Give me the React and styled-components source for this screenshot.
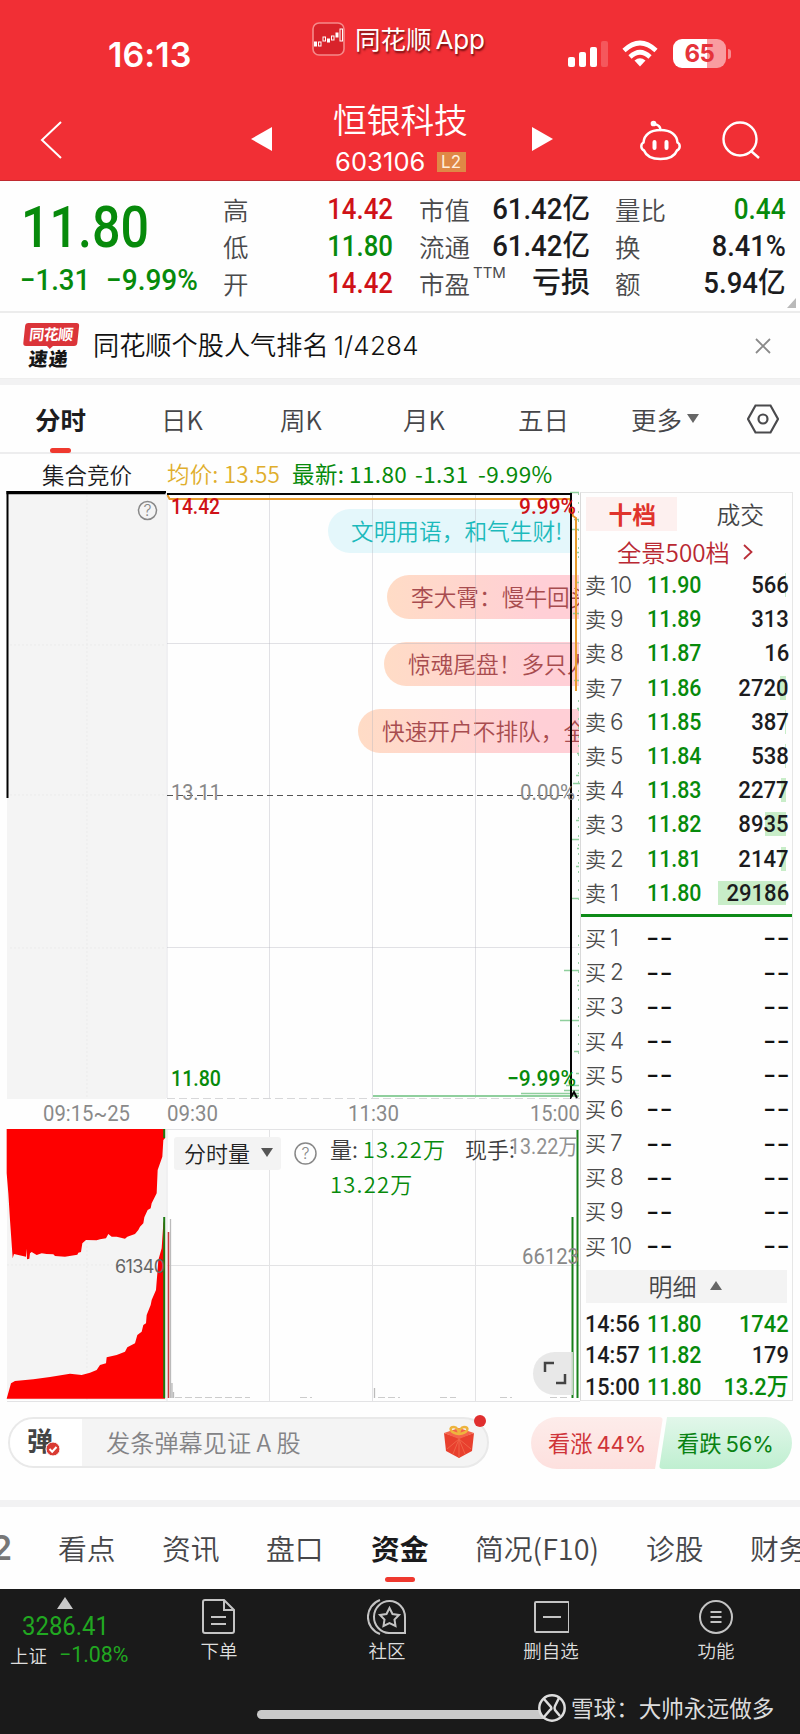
import React from 'react';
import styled, { createGlobalStyle, css } from 'styled-components';

const CJK = `"Noto Sans CJK SC", sans-serif`;
const GREEN = '#078a0b';
const RED = '#cf1217';

const Global = createGlobalStyle`
  * { box-sizing: border-box; }
  body { margin: 0; background: #fdfdfd; font-family: ${CJK}; font-weight: 350; color: #222; }
`;

const Phone = styled.div`
  width: 800px;
  height: 1734px;
  overflow: hidden;
  display: flex;
  flex-direction: column;
  background: #fefefe;
`;

/* Condensed figures, used for every price and amount */
const Num = styled.span`
  display: inline-block;
  font-family: Roboto, ${CJK};
  font-weight: ${p => p.$weight || 500};
  font-size: ${p => p.$size}px;
  line-height: 1;
  white-space: nowrap;
  color: ${p => p.$color || '#1c1c1e'};
  transform: scaleX(${p => p.$fit || 0.89});
  transform-origin: ${p => (p.$right ? 'right' : 'left')} center;
`;

/* ---------- header ---------- */
const Header = styled.header`
  height: 181px;
  flex: none;
  background: #f12f35;
  border-bottom: 1px solid #c02a30;
  color: #fff;
`;
const StatusBar = styled.div`
  height: 96px;
  display: grid;
  grid-template-columns: 312px 256px 1fr;
`;
const Clock = styled.div`
  padding: 34px 0 0 108px;
  font: 600 34px/42px Inter, sans-serif;
  letter-spacing: 0.1px;
`;
const Brand = styled.div`
  display: flex;
  align-items: flex-start;
  gap: 10px;
  padding-top: 22px;
  font-size: 25.5px;
  line-height: 34px;
  text-shadow: 1px 2px 2px rgba(60, 0, 0, 0.7);
  svg { display: block; }
`;
const BrandName = styled.span`
  margin-top: -1px;
  font-weight: 400;
  white-space: nowrap;
`;
const BrandLatin = styled.span`
  font: 26px Inter, sans-serif;
  margin-left: 4px;
  letter-spacing: -0.2px;
`;
const Signals = styled.div`
  display: flex;
  align-items: flex-start;
  padding-top: 39px;
  svg { display: block; flex: none; }
`;
const WifiIcon = styled.svg` margin-left: 13px; `;
const Battery = styled.div`
  margin-left: 14px;
  width: 53px;
  height: 29px;
  border-radius: 9px;
  background: linear-gradient(90deg, #fff 65%, #f99ca0 65%);
  color: #e5333a;
  text-align: center;
  font: 700 24px/29px Inter, sans-serif;
  letter-spacing: -0.5px;
`;
const BatteryTip = styled.div`
  width: 3px;
  height: 10px;
  margin: 10px 0 0 2px;
  border-radius: 0 3px 3px 0;
  background: #f88b8f;
`;
const NavBar = styled.div`
  height: 84px;
  display: grid;
  grid-template-columns: 251px 82px 133px 66px 106px 84px 1fr;
  svg { display: block; }
`;
const Back = styled.div` padding: 25px 0 0 40px; `;
const Arrow = styled.div` padding-top: 31px; `;
const Robot = styled.div` padding-top: 22px; `;
const Search = styled.div` padding-top: 25px; `;
const StockTitle = styled.div`
  font-size: 33.7px;
  line-height: 46px;
  height: 50px;
  white-space: nowrap;
`;
const StockCode = styled.div`
  display: flex;
  align-items: center;
  height: 24px;
  margin-top: 4px;
  padding-left: 2px;
  gap: 11px;
  font: 25.5px/24px Inter, sans-serif;
  letter-spacing: 0.1px;
`;
const LevelBadge = styled.span`
  width: 29px;
  height: 20px;
  background: #df8846;
  color: #ffeedd;
  font: 17px/20px Inter, sans-serif;
  letter-spacing: 0;
  text-align: center;
`;

/* ---------- quote ---------- */
const Quote = styled.section`
  position: relative;
  height: 132px;
  flex: none;
  display: grid;
  grid-template-columns: 203px 169px 169px 171px;
  padding-left: 20px;
  border-bottom: 2px solid #ececec;
`;
const LastPrice = styled.div`
  padding: 17px 0 0 1px;
  height: 84px;
`;
const Change = styled.div`
  display: flex;
  gap: 12px;
  padding-top: 1px;
`;
const Metrics = styled.div`
  display: flex;
  flex-direction: column;
  padding-top: 10px;
  width: 169px;
  margin-left: ${p => p.$left}px;
`;
const Metric = styled.div`
  width: ${p => p.$w}px;
  height: 37px;
  display: flex;
  align-items: center;
  justify-content: space-between;
`;
const MetricLabel = styled.span`
  position: relative;
  font-size: 25.5px;
  line-height: 37px;
  margin-top: -3px;
  color: #4a4a4c;
  sup {
    position: absolute;
    left: 54px;
    top: -6px;
    font: 15px/30px Inter, sans-serif;
  }
`;
const Corner = styled.div`
  position: absolute;
  left: 787px;
  top: 117px;
  border-left: 9px solid transparent;
  border-bottom: 10px solid #b9b9b9;
`;

/* ---------- news strip ---------- */
const News = styled.section`
  height: 66px;
  flex: none;
  display: flex;
  align-items: center;
  padding: 0 29px 0 23px;
  border-bottom: 1px solid #eee;
`;
const NewsLogo = styled.div`
  width: 54px;
  height: 46px;
  position: relative;
  text-align: center;
  transform: skewX(-6deg);
`;
const NewsLogoTop = styled.div`
  height: 23px;
  border-radius: 3px;
  background: #db3439;
  color: #fff;
  font-weight: 700;
  font-size: 15px;
  line-height: 22px;
  letter-spacing: -0.5px;
  &::after {
    content: '';
    position: absolute;
    left: 23px;
    top: 22px;
    border: 4px solid transparent;
    border-top-color: #db3439;
  }
`;
const NewsLogoBottom = styled.div`
  font-weight: 900;
  font-size: 19px;
  line-height: 23px;
  letter-spacing: 1px;
  color: #161616;
`;
const NewsText = styled.div`
  flex: 1;
  margin-top: -3px;
  padding-left: 16px;
  font-size: 26.2px;
  line-height: 40px;
  color: #111;
  white-space: nowrap;
  b { font: 350 26px Inter, sans-serif; letter-spacing: 0.2px; margin-left: 5px; }
`;
const Band = styled.div`
  height: ${p => p.$h}px;
  flex: none;
  background: #f2f2f3;
`;

/* ---------- period tabs ---------- */
const Periods = styled.nav`
  height: 69px;
  flex: none;
  display: grid;
  grid-template-columns: 126px 119px 123px 115px 113px 116px 1fr;
  padding-left: 35px;
  border-bottom: 2px solid #ededee;
`;
const Period = styled.div`
  position: relative;
  height: 69px;
  padding-bottom: 2px;
  display: flex;
  align-items: center;
  font-size: 25.5px;
  font-weight: ${p => (p.$on ? 700 : 350)};
  color: ${p => (p.$on ? '#1d1d1f' : '#464649')};
  ${p => p.$on && css`
    &::after {
      content: '';
      position: absolute;
      left: 15px;
      bottom: 1px;
      width: 21px;
      height: 5px;
      border-radius: 3px;
      background: #ef392f;
    }
  `}
`;
const Caret = styled.i`
  display: block;
  width: 0;
  border: ${p => p.$s}px solid transparent;
  border-bottom-width: ${p => (p.$up ? p.$s * 1.6 : 0)}px;
  border-top-width: ${p => (p.$up ? 0 : p.$s * 1.6)}px;
  border-${p => (p.$up ? 'bottom' : 'top')}-color: ${p => p.$c || '#666'};
  margin-left: ${p => p.$ml || 0}px;
`;

const InfoLine = styled.div`
  height: 37px;
  flex: none;
  display: flex;
  align-items: center;
  font-size: 22.5px;
  font-weight: 400;
  line-height: 36px;
  white-space: pre;
`;
const AuctionTitle = styled.span` width: 167px; padding: 2px 0 0 42px; font-weight: 350; color: #1c1c1e; `;
const Average = styled.span` width: 125px; color: #e0ae2c; font-weight: 350; letter-spacing: .15px; `;
const Latest = styled.span` color: ${GREEN}; display: flex; letter-spacing: .4px; `;
const LatestPart = styled.span` width: ${p => p.$w}px; `;

/* ---------- market ---------- */
const Market = styled.section`
  height: 911px;
  flex: none;
  display: flex;
`;
const Charts = styled.div`
  width: 580px;
  display: flex;
  flex-direction: column;
  svg { display: block; }
`;
const PricePane = styled.div`
  position: relative;
  height: 608px;
  overflow: hidden;
`;
const Lines = styled.svg`
  position: relative;
`;
const Barrage = styled.div`
  position: absolute;
  left: ${p => p.$x}px;
  top: ${p => p.$y}px;
  width: ${p => (p.$cool ? 242 : 579 - p.$x)}px;
  height: 44px;
  border-radius: 22px 0 0 22px;
  overflow: hidden;
  padding-left: ${p => (p.$cool ? 23 : 24)}px;
  font-size: 22.7px;
  line-height: 43px;
  white-space: nowrap;
  color: ${p => (p.$cool ? '#1cbabc' : '#a84c4f')};
  background: ${p => (p.$cool
    ? '#e4f7fb'
    : 'linear-gradient(90deg, #ffdcc6, #ffcfd6 80%)')};
`;
const Axis = styled.div`
  height: 30px;
  display: grid;
  grid-template-columns: 124px 181px 182px 1fr;
  padding-left: 43px;
  align-items: center;
`;
const VolumePane = styled.div`
  position: relative;
  height: 273px;
`;
const VolumeTools = styled.div`
  position: absolute;
  left: 174px;
  top: 8px;
  display: grid;
  grid-template-columns: 107px 14px 1fr;
  align-items: start;
`;
const Picker = styled.div`
  height: 33px;
  width: 107px;
  padding: 0 0 3px 10px;
  display: flex;
  align-items: center;
  background: #f3f3f3;
  border-radius: 3px;
  font-size: 22px;
  color: #222;
`;
const VolumeText = styled.div`
  grid-column: 3;
  padding-left: 35px;
  margin-top: -6px;
  font-size: 22px;
  line-height: 35px;
  white-space: pre;
  color: #3c3c3c;
  em { font-style: normal; color: ${GREEN}; letter-spacing: 1.2px; margin-right: 4px; }
`;
const Expand = styled.div`
  position: absolute;
  left: 533px;
  top: 223px;
  width: 40px;
  height: 43px;
  border-radius: 22px 0 0 22px;
  background: rgba(228, 228, 228, 0.85);
`;

/* ---------- order book ---------- */
const Book = styled.aside`
  width: 213px;
  height: 909px;
  padding-top: 4px;
  margin-top: 1px;
  border: 1px solid #e6e6e6;
  border-left-color: #d9d9d9;
`;
const BookTabs = styled.div`
  display: flex;
  height: 34px;
  padding-left: 5px;
  font-size: 23.8px;
  line-height: 33px;
`;
const BookTab = styled.div`
  width: ${p => (p.$on ? 94 : 119)}px;
  padding-left: ${p => (p.$on ? 2 : 12)}px;
  text-align: center;
  background: ${p => (p.$on ? '#fdf0ef' : 'none')};
  color: ${p => (p.$on ? '#e0332c' : '#464648')};
  font-weight: ${p => (p.$on ? 700 : 350)};
`;
const Depth = styled.div`
  height: 37px;
  padding: 4px 0 0 36px;
  display: flex;
  align-items: center;
  gap: 13px;
  font-size: 24.3px;
  line-height: 34px;
  color: #b92832;
`;
const BookRow = styled.div`
  height: ${p => p.$h || 34.2}px;
  display: grid;
  grid-template-columns: 62px 67px 1fr;
  align-items: center;
  padding: 0 3px 0 4px;
`;
const Level = styled.span`
  font-size: 21px;
  line-height: 30px;
  margin-top: -2px;
  color: #4c4c4c;
  white-space: nowrap;
  b { font: 350 22.5px Inter, ${CJK}; letter-spacing: -0.5px; margin-left: 4px; }
`;
const Amount = styled.div`
  height: 24px;
  display: flex;
  justify-content: flex-end;
  align-items: center;
  background: linear-gradient(#c8edc8, #c8edc8) no-repeat right 3px top / ${p => p.$bar || 0}px 24px;
`;
const Blank = styled.span`
  font: 400 29px/24px Inter, sans-serif;
  color: #111;
  letter-spacing: 0.2px;
  margin: 1px -1px 0 -1px;
  text-align: ${p => (p.$right ? 'right' : 'left')};
`;
const Split = styled.div`
  height: 3px;
  margin: 4px 0 4px;
  background: #0d8a17;
`;
const DetailHead = styled.div`
  height: 33px;
  margin: 7px 5px 5px;
  padding: 0 3px 1px 0;
  display: flex;
  align-items: center;
  justify-content: center;
  background: #f3f3f3;
  font-size: 24px;
  color: #464648;
`;

/* ---------- comment bar ---------- */
const CommentBar = styled.section`
  height: 98px;
  flex: none;
  display: flex;
  padding: 15px 8px 0;
`;
const Comment = styled.div`
  width: 481px;
  height: 51px;
  position: relative;
  display: flex;
  border: 2px solid #e9e9e9;
  border-radius: 26px;
  background: #f4f4f4;
`;
const Toggle = styled.div`
  width: 72px;
  border-radius: 24px 0 0 24px;
  background: #fff;
  padding-left: 17px;
  font-size: 26px;
  line-height: 41px;
  font-weight: 700;
  color: #444;
`;
const CheckBadge = styled.div`
  position: absolute;
  left: 35px;
  top: 22px;
  svg { display: block; }
`;
const Placeholder = styled.div`
  flex: 1;
  padding-left: 24px;
  font-size: 24.2px;
  line-height: 46px;
  color: #838386;
  white-space: pre;
`;
const Gift = styled.div`
  position: absolute;
  left: 432px;
  top: -5px;
`;
const Votes = styled.div`
  display: flex;
  margin-left: 42px;
`;
const Vote = styled.div`
  width: ${p => (p.$down ? 133 : 132)}px;
  margin-left: ${p => (p.$down ? -4 : 0)}px;
  height: 52px;
  padding-left: ${p => (p.$down ? 18 : 17)}px;
  font-size: 22.3px;
  font-weight: 400;
  line-height: 50px;
  white-space: nowrap;
  color: ${p => (p.$down ? '#0a8213' : '#cf3439')};
  border-radius: ${p => (p.$down ? '4px 26px 26px 4px' : '26px 4px 4px 26px')};
  background: ${p => (p.$down ? 'linear-gradient(#e2f7ea, #bfefd0)' : 'linear-gradient(#fdecea, #fde0de)')};
  clip-path: ${p => (p.$down ? 'polygon(8px 0, 100% 0, 100% 100%, 0 100%)' : 'polygon(0 0, 100% 0, 124px 100%, 0 100%)')};
  b { font: 400 22px Inter, sans-serif; letter-spacing: -0.2px; margin-left: 4px; }
`;

/* ---------- section tabs ---------- */
const Sections = styled.nav`
  height: 82px;
  flex: none;
  display: grid;
  grid-template-columns: 69px 104px 104px 105px 104px 171px 104px 60px;
  margin-left: -11px;
  width: 821px;
`;
const Section = styled.div`
  position: relative;
  font-size: 28.8px;
  line-height: 81px;
  white-space: nowrap;
  font-weight: ${p => (p.$on ? 700 : 350)};
  color: ${p => (p.$on ? '#1a1a1c' : '#464649')};
  ${p => p.$cut && css` font: 600 34px/82px Inter, sans-serif; color: #777; padding-left: 2px; `}
  ${p => p.$on && css`
    &::after {
      content: '';
      position: absolute;
      left: 14px;
      top: 70px;
      width: 30px;
      height: 5px;
      border-radius: 3px;
      background: #ef392f;
    }
  `}
`;

/* ---------- bottom bar ---------- */
const Bottom = styled.footer`
  position: relative;
  height: 146px;
  flex: none;
  background: #1a1a1a;
  color: #dedede;
`;
const Tools = styled.div`
  display: grid;
  grid-template-columns: 140px 158px 178px 150px 180px;
  height: 84px;
`;
const IndexBox = styled.div`
  padding: 8px 0 0 10px;
`;
const IndexValue = styled.div`
  height: 26px;
  padding-left: 12px;
  margin: 4px 0 0;
  line-height: 0;
`;
const IndexChange = styled.div`
  display: flex;
  align-items: center;
  gap: 12px;
  font-size: 18.5px;
  line-height: 26px;
  margin-top: 3px;
`;
const Tool = styled.div`
  display: flex;
  flex-direction: column;
  align-items: center;
  padding-top: 8px;
  font-size: 18.5px;
  line-height: 28px;
  svg { display: block; margin-bottom: -1px; }
`;
const HomeBar = styled.div`
  width: 292px;
  height: 9px;
  margin: 37px 0 0 257px;
  border-radius: 5px;
  background: #c9c9c9;
`;
const Watermark = styled.div`
  position: absolute;
  left: 537px;
  top: 102px;
  display: flex;
  align-items: center;
  gap: 4px;
  font-size: 22.6px;
  font-weight: 400;
  line-height: 30px;
  height: 33px;
  color: #dcdcdc;
  white-space: nowrap;
  svg { display: block; }
`;

const sells = [
  ['10', '11.90', '566', 1], ['9', '11.89', '313', 0], ['8', '11.87', '16', 0],
  ['7', '11.86', '2720', 6], ['6', '11.85', '387', 1], ['5', '11.84', '538', 1],
  ['4', '11.83', '2277', 5], ['3', '11.82', '8935', 21], ['2', '11.81', '2147', 5],
  ['1', '11.80', '29186', 68],
];
const buys = ['1', '2', '3', '4', '5', '6', '7', '8', '9', '10'];
const deals = [
  ['14:56', '11.80', '1742', GREEN], ['14:57', '11.82', '179', '#1c1c1e'], ['15:00', '11.80', '13.2万', GREEN],
];

const ChartText = ({ x, y, w, size = 22, color, weight = 500, children }) => (
  <text x={x} y={y} textLength={w} lengthAdjust="spacingAndGlyphs" fill={color}
    fontSize={size} fontWeight={weight} fontFamily={`Roboto, ${CJK}`}>{children}</text>
);

const Question = ({ cx, cy, r }) => (
  <g>
    <circle cx={cx} cy={cy} r={r} fill="none" stroke="#888" strokeWidth="1.5" />
    <text x={cx} y={cy + 5.5} textAnchor="middle" fontSize="16" fontFamily="Inter" fill="#888">?</text>
  </g>
);

const priceTicks = [[570, 492, 9], [574, 519, 5], [572, 529, 7], [577, 552, 2], [575, 582, 4], [573, 613, 6],
  [574, 680, 5], [577, 708, 2], [577, 753, 2], [576, 775, 3], [573, 783, 7], [576, 820, 3], [572, 839, 7], [577, 848, 2],
  [576, 866, 3], [572, 898, 7], [564, 970, 15], [577, 985, 2], [560, 1020, 19], [574, 1051, 5], [576, 1073, 3],
  [566, 1085, 13], [521, 1093, 58], [564, 1090, 15]];

function PriceChart() {
  return (
    <Lines width="580" height="608" viewBox="0 491 580 608">
      <rect x="7" y="493" width="159" height="606" fill="#f4f4f4" />
      <path d="M87 495V1098M10 645H166M10 795H166M10 948H166" stroke="#ebebeb" strokeDasharray="2 2" />
      <path d="M167 493V1098M269.5 493V1098M372.5 493V1098M475.5 493V1098M167 643.5H580M167 947.5H580" stroke="#b4b4bc" strokeOpacity=".38" />
      <path d="M167 1098.5H580" stroke="#d7d7d9" strokeDasharray="8 4" />
      <path d="M167 795.5H579" stroke="#555" strokeDasharray="6 4" />
      <path d={priceTicks.map(([x, y, w]) => `M${x} ${y + 0.5}h${w}`).join('')} stroke="#8fcf9d" strokeWidth="1.3" />
      <path d="M373 1096H579" stroke="#8fcf9d" strokeWidth="1.8" />
      <path d="M578.5 493V560M578.5 700V900M578.5 935V1060" stroke="#9ed2a9" strokeDasharray="2 7" />
      <path d="M7.5 798V492H166" fill="none" stroke="#000" strokeWidth="2" />
      <path d="M6.5 492.5H165.5" stroke="#000" strokeWidth="3.5" />
      <path d="M167.5 495L169.500 499H570L573 516L576 518V691" fill="none" stroke="#e79a2b" strokeWidth="2" />
      <path d="M167 494H571V1097L574 1092L577 1098" fill="none" stroke="#060606" strokeWidth="2" />
      <ChartText x={171} y={514} w={49} color={RED}>14.42</ChartText>
      <ChartText x={519} y={514} w={57} color={RED}>9.99%</ChartText>
      <ChartText x={171} y={800} w={50} color="#888" weight={400}>13.11</ChartText>
      <ChartText x={520} y={800} w={55} color="#888" weight={400}>0.00%</ChartText>
      <ChartText x={171} y={1085.5} w={50} color={GREEN}>11.80</ChartText>
      <ChartText x={507} y={1085.5} w={69} color={GREEN}>−9.99%</ChartText>
      <Question cx={147.5} cy={510.5} r={9} />
    </Lines>
  );
}

const redTop = '20,206 20,340 25,400 30,480 38,595 42,582 78,590 80,566 81,598 88,596 90,580 95,576 110,585 125,580 140,582 160,583 165,588 195,590 232,584 235,578 243,576 247,550 258,540 290,541 300,538 318,535 325,522 335,530 350,530 375,536 382,530 405,522 415,510 420,500 430,490 433,472 443,450 452,445 455,430 470,400 473,330 487,290 490,240 495,235 495,206';
const redLow = '20,1016 33,970 45,963 100,958 150,951 210,941 245,945 270,938 290,930 300,915 318,910 320,892 350,885 375,875 382,862 405,850 412,825 425,815 430,795 438,790 440,765 452,735 455,720 468,690 472,640 475,600 485,565 490,490 495,472 495,1016';

function VolumeChart() {
  return (
    <svg width="580" height="273" viewBox="0 1129 580 273">
      <rect x="7" y="1129" width="159" height="271" fill="#f4f4f4" />
      <path d="M87 1130V1400M7 1265H166" stroke="#ebebeb" strokeDasharray="2 2" />
      <path d="M7 1129.5H580M167 1129V1401M269.5 1129V1401M372.5 1129V1401M475.5 1129V1401M167 1265.5H580M7 1401.5H580" stroke="#e3e3e5" />
      <g transform="translate(0 1060) scale(.33333)" fill="#fe0000">
        <polygon points={redTop} />
        <polygon points={redLow} />
      </g>
      <path d="M164.2 1129v9M164.2 1217V1398" stroke="#1e7a12" strokeWidth="2" />
      <path d="M168.5 1232V1398" stroke="#c9383c" strokeWidth="1.6" />
      <path d="M170.5 1219V1398M172 1383V1398M173.5 1392V1398M374.5 1388V1398" stroke="#bbb" strokeWidth="1.3" />
      <path d="M175 1397.5H250M300 1397.5H312M378 1397.5H400M440 1397.5H456M500 1397.5H512M550 1397.5H570" stroke="#ccc" strokeDasharray="7 3" />
      <path d="M572.5 1217V1398M577.5 1130V1398" stroke="#16801a" strokeWidth="2" />
      <text x="115" y="1273" fontSize="18" textLength="50" fontFamily="Inter" fontWeight="400" fill="#666">61340</text>
      <ChartText x={509} y={1154} w={69} color="#909090" weight={400}>13.22万</ChartText>
      <ChartText x={522} y={1264} w={57} color="#888" weight={400}>66123</ChartText>
      <Question cx={305.5} cy={1153.5} r={10.5} />
    </svg>
  );
}

export default function App() {
  return (
    <Phone>
      <Global />
      <Header>
        <StatusBar>
          <Clock>16:13</Clock>
          <Brand>
            <svg width="33" height="34" viewBox="0 0 33 34">
              <rect x="1" y="1" width="31" height="32" rx="6" fill="#d9232b" stroke="#f58a8a" strokeWidth="1.6" />
              <g stroke="#fff" fill="none" strokeWidth="1">
                <rect x="2.5" y="20" width="2" height="4" fill="#fff" /><rect x="6.5" y="20" width="2.5" height="4" />
                <rect x="11" y="15" width="2.5" height="4" /><rect x="15.5" y="17" width="2" height="3" fill="#fff" />
                <rect x="19.5" y="14" width="2.500" height="4" /><rect x="24" y="11" width="2" height="4" fill="#fff" /><rect x="28" y="7" width="2.500" height="12" />
              </g>
            </svg>
            <BrandName>同花顺<BrandLatin>App</BrandLatin></BrandName>
          </Brand>
          <Signals>
            <svg width="41" height="30" viewBox="0 0 41 30" fill="#fff">
              <rect x="0" y="18" width="7" height="10" rx="2" /><rect x="11" y="13" width="7" height="15" rx="2" />
              <rect x="22" y="8" width="7" height="20" rx="2" /><rect x="33" y="2" width="7" height="26" rx="2" fill="#f5575c" />
            </svg>
            <WifiIcon width="37" height="30" viewBox="0 0 37 30" fill="none" stroke="#fff" strokeWidth="4.6">
              <path d="M2 11.5Q18 -3.5 34 11.5" /><path d="M8 18Q18 8.5 28 18" />
              <path d="M12.5 21.5Q18 17 23.500 21.500L18 27.500Z" fill="#fff" stroke="none" />
            </WifiIcon>
            <Battery>65</Battery><BatteryTip />
          </Signals>
        </StatusBar>
        <NavBar>
          <Back><svg width="24" height="38" viewBox="0 0 24 38"><path d="M21 1L2 19L21 37" fill="none" stroke="#fff" strokeWidth="2" /></svg></Back>
          <Arrow><svg width="21" height="24"><path d="M21 0V24L0 12Z" fill="#fff" /></svg></Arrow>
          <div>
            <StockTitle>恒银科技</StockTitle>
            <StockCode>603106<LevelBadge>L2</LevelBadge></StockCode>
          </div>
          <div />
          <Arrow><svg width="21" height="24"><path d="M0 0V24L21 12Z" fill="#fff" /></svg></Arrow>
          <Robot>
            <svg width="46" height="44" viewBox="0 0 46 44" fill="none" stroke="#fff" strokeWidth="2.5" strokeLinecap="round">
              <path d="M22.500 12C33 12 39 17 39.500 24.500C42.500 26 42.500 31 39 32.500C36.500 39 31 41 22.500 41C14 41 8.500 39 6 32.500C2.500 31 2.500 26 5.500 24.500C6 17 12 12 22.500 12Z" />
              <path d="M22.500 12Q22.500 7 16 6" /><circle cx="15.500" cy="5.500" r="1.600" fill="#fff" />
              <path d="M16.500 24v6M28.500 24v6" strokeWidth="4" />
            </svg>
          </Robot>
          <Search>
            <svg width="38" height="38" viewBox="0 0 38 38" fill="none" stroke="#fff" strokeWidth="2.4"><circle cx="18" cy="18" r="16.500" /><path d="M29 30L37 37" /></svg>
          </Search>
        </NavBar>
      </Header>

      <Quote>
        <div>
          <LastPrice><Num $size={58} $color={GREEN} $fit={0.865}>11.80</Num></LastPrice>
          <Change>
            <Num $size={29} $color={GREEN} $fit={0.95}>−1.31</Num>
            <Num $size={29} $color={GREEN} $fit={0.965}>−9.99%</Num>
          </Change>
        </div>
        <Metrics $left={0}>
          <Metric $w={170}><MetricLabel>高</MetricLabel><Num $right $size={29} $color={RED}>14.42</Num></Metric>
          <Metric $w={170}><MetricLabel>低</MetricLabel><Num $right $size={29} $color={GREEN}>11.80</Num></Metric>
          <Metric $w={170}><MetricLabel>开</MetricLabel><Num $right $size={29} $color={RED}>14.42</Num></Metric>
        </Metrics>
        <Metrics $left={27}>
          <Metric $w={171}><MetricLabel>市值</MetricLabel><Num $right $size={29} $fit={0.95}>61.42亿</Num></Metric>
          <Metric $w={171}><MetricLabel>流通</MetricLabel><Num $right $size={29} $fit={0.95}>61.42亿</Num></Metric>
          <Metric $w={171}><MetricLabel>市盈<sup>TTM</sup></MetricLabel><Num $right $size={29} $fit={1}>亏损</Num></Metric>
        </Metrics>
        <Metrics $left={54}>
          <Metric $w={171}><MetricLabel>量比</MetricLabel><Num $right $size={29} $color={GREEN} $fit={0.9}>0.44</Num></Metric>
          <Metric $w={171}><MetricLabel>换</MetricLabel><Num $right $size={29} $fit={0.94}>8.41%</Num></Metric>
          <Metric $w={171}><MetricLabel>额</MetricLabel><Num $right $size={29} $fit={0.95}>5.94亿</Num></Metric>
        </Metrics>
        <Corner />
      </Quote>

      <News>
        <NewsLogo><NewsLogoTop>同花顺</NewsLogoTop><NewsLogoBottom>速递</NewsLogoBottom></NewsLogo>
        <NewsText>同花顺个股人气排名<b>1/4284</b></NewsText>
        <svg width="16" height="16"><path d="M1 1L15 15M15 1L1 15" stroke="#8a8a8a" strokeWidth="1.800" /></svg>
      </News>
      <Band $h={6} />

      <Periods>
        <Period $on>分时</Period><Period>日K</Period><Period>周K</Period><Period>月K</Period><Period>五日</Period>
        <Period>更多<Caret $s={6} $ml={5} /></Period>
        <Period>
          <svg width="32" height="30" viewBox="0 0 32 30" fill="none" stroke="#4a4a4d" strokeWidth="2.2"><path d="M8.500 1.500H23.500L31 15L23.500 28.500H8.500L1 15Z" /><circle cx="16" cy="15" r="4.500" /></svg>
        </Period>
      </Periods>

      <InfoLine>
        <AuctionTitle>集合竞价</AuctionTitle>
        <Average>均价: 13.55</Average>
        <Latest><LatestPart $w={57}>最新:</LatestPart><LatestPart $w={66}>11.80</LatestPart><LatestPart $w={63}>-1.31</LatestPart><span>-9.99%</span></Latest>
      </InfoLine>

      <Market>
        <Charts>
          <PricePane>
            <Barrage $cool $x={328} $y={18}>文明用语，和气生财!</Barrage>
            <Barrage $x={387} $y={84}>李大霄：慢牛回头</Barrage>
            <Barrage $x={384} $y={151}>惊魂尾盘！多只人</Barrage>
            <Barrage $x={358} $y={218}>快速开户不排队，全</Barrage>
            <PriceChart />
          </PricePane>
          <Axis>
            <Num $size={22} $weight={400} $color="#8a8a8a" $fit={0.92}>09:15~25</Num>
            <Num $size={22} $weight={400} $color="#8a8a8a" $fit={0.93}>09:30</Num>
            <Num $size={22} $weight={400} $color="#8a8a8a" $fit={0.93}>11:30</Num>
            <Num $size={22} $weight={400} $color="#8a8a8a" $fit={0.91}>15:00</Num>
          </Axis>
          <VolumePane>
            <VolumeChart />
            <VolumeTools>
              <Picker>分时量<Caret $s={6} $ml={11} $c="#555" /></Picker>
              <div />
              <VolumeText>量: <em>13.22万</em>   现手:{'\n'}<em>13.22万</em></VolumeText>
            </VolumeTools>
            <Expand><svg width="40" height="43" fill="none" stroke="#444" strokeWidth="2.500"><path d="M12 20V11H21M32 22V31H23" /></svg></Expand>
          </VolumePane>
        </Charts>
        <Book>
          <BookTabs><BookTab $on>十档</BookTab><BookTab>成交</BookTab></BookTabs>
          <Depth>全景500档<svg width="10" height="16"><path d="M1 1L8.500 8L1 15" fill="none" stroke="#b92e38" strokeWidth="1.800" /></svg></Depth>
          {sells.map(([n, price, qty, bar]) => (
            <BookRow key={n}>
              <Level>卖<b>{n}</b></Level>
              <Num $size={24} $color={GREEN}>{price}</Num>
              <Amount $bar={bar}><Num $right $size={24} $fit={0.92}>{qty}</Num></Amount>
            </BookRow>
          ))}
          <Split />
          {buys.map(n => (
            <BookRow key={n}>
              <Level>买<b>{n}</b></Level>
              <Blank>--</Blank>
              <Blank $right>--</Blank>
            </BookRow>
          ))}
          <DetailHead>明细<Caret $up $s={6} $ml={13} /></DetailHead>
          {deals.map(([time, price, qty, color]) => (
            <BookRow key={time} $h={31.7}>
              <Num $size={24} $fit={0.9}>{time}</Num>
              <Num $size={24} $color={GREEN}>{price}</Num>
              <Amount><Num $right $size={24} $color={color} $fit={0.91}>{qty}</Num></Amount>
            </BookRow>
          ))}
        </Book>
      </Market>

      <CommentBar>
        <Comment>
          <Toggle>弹
            <CheckBadge><svg width="16" height="16"><circle cx="8" cy="8" r="7" fill="#d93a32" stroke="#fff" /><path d="M4.500 8L7.200 10.700L11.500 6" fill="none" stroke="#fff" strokeWidth="2" /></svg></CheckBadge>
          </Toggle>
          <Placeholder>发条弹幕见证 A 股</Placeholder>
          <Gift>
            <svg width="48" height="48" viewBox="0 0 48 48">
              <circle cx="38" cy="7" r="6" fill="#e02f2f" />
              <path d="M2 19L17 24L32 19L30 37L17 44L4 37Z" fill="#e8402e" />
              <path d="M2 19L17 14L32 19L17 25Z" fill="#f4644a" />
              <path d="M17 25V44M17 25L5 35M17 25L29 35M17 25L11 40M17 25L23 40" stroke="#f06448" strokeWidth="1" />
              <path d="M17 20C8 19 6 13 12 13C15 13 17 17 17 20C17 17 19 13 22 13C28 13 26 19 17 20Z" fill="none" stroke="#eeb43d" strokeWidth="2.500" />
            </svg>
          </Gift>
        </Comment>
        <Votes><Vote>看涨<b>44%</b></Vote><Vote $down>看跌<b>56%</b></Vote></Votes>
      </CommentBar>
      <Band $h={7} />

      <Sections>
        <Section $cut>2</Section><Section>看点</Section><Section>资讯</Section><Section>盘口</Section>
        <Section $on>资金</Section><Section>简况(F10)</Section><Section>诊股</Section><Section>财务</Section>
      </Sections>

      <Bottom>
        <Tools>
          <IndexBox>
            <Caret $up $s={8} $ml={47} $c="#c8c8c8" />
            <IndexValue><Num $size={26} $weight={400} $color="#21a821" $fit={0.92}>3286.41</Num></IndexValue>
            <IndexChange>上证<Num $size={22} $weight={400} $color="#21a821" $fit={0.97}>−1.08%</Num></IndexChange>
          </IndexBox>
          <Tool>
            <svg width="36" height="40" viewBox="0 0 36 40" fill="none" stroke="#c4c4c4" strokeWidth="2"><path d="M4 3H23L33 13V34Q33 36 31 36H4Q2 36 2 34V5Q2 3 4 3ZM23 3V13H33M10 20H25M10 27H25" /></svg>
            下单
          </Tool>
          <Tool>
            <svg width="40" height="40" viewBox="0 0 40 40" fill="none" stroke="#c4c4c4" strokeWidth="2"><path d="M38 36H22A15.500 16 0 1 1 38 20Z" /><path d="M13 3A18 18 0 0 0 13 37" /><path d="M22.500 11L25.500 17L32 18L27.500 22.500L28.500 29L22.500 26L16.500 29L17.500 22.500L13 18L19.500 17Z" /></svg>
            社区
          </Tool>
          <Tool>
            <svg width="36" height="40" viewBox="0 0 36 40" fill="none" stroke="#c4c4c4" strokeWidth="2"><rect x="2" y="5" width="34" height="30" rx="1" /><path d="M10 20H28" /></svg>
            删自选
          </Tool>
          <Tool>
            <svg width="36" height="40" viewBox="0 0 36 40" fill="none" stroke="#c4c4c4" strokeWidth="2"><circle cx="18" cy="20" r="16" /><path d="M12.500 15H23.500M12.500 20H23.500M12.500 25H23.500" /></svg>
            功能
          </Tool>
        </Tools>
        <HomeBar />
        <Watermark>
          <svg width="30" height="30" viewBox="0 0 30 30" fill="none" stroke="#ddd" strokeWidth="2.500"><circle cx="15" cy="15" r="12.700" fill="#1a1a1a" /><path d="M7 6L14 14Q15 16 13 17L7 24M22 5L18 13Q17 15 18 17L23 23" /></svg>
          <span>雪球：大帅永远做多</span>
        </Watermark>
      </Bottom>
    </Phone>
  );
}
